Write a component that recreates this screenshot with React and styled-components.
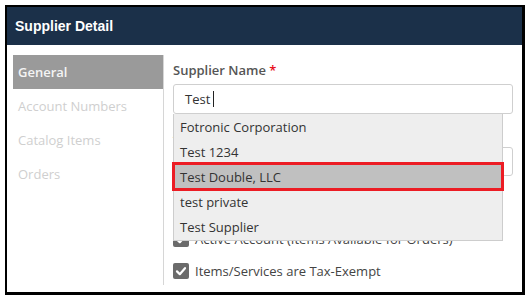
import React from "react";
import styled, { createGlobalStyle } from "styled-components";

const GlobalStyle = createGlobalStyle`
  body {
    margin: 0;
    background: #ffffff;
    font-family: "Open Sans", "Liberation Sans", sans-serif;
  }
`;

const suppliers = [
  "Fotronic Corporation",
  "Test 1234",
  "Test Double, LLC",
  "test private",
  "Test Supplier",
];

const sections = ["General", "Account Numbers", "Catalog Items", "Orders"];

function Check() {
  return (
    <Box>
      <svg width="12" height="12" viewBox="0 0 12 12">
        <path
          d="M2 6.4 L4.8 9.2 L10 3.2"
          fill="none"
          stroke="#fff"
          strokeWidth="2.2"
          strokeLinecap="round"
          strokeLinejoin="round"
        />
      </svg>
    </Box>
  );
}

export default function App() {
  return (
    <>
      <GlobalStyle />
      <Frame>
        <Header>Supplier Detail</Header>
        <Body>
          <Sidebar>
            {sections.map((s, i) => (
              <NavItem key={s} active={i === 0}>
                {s}
              </NavItem>
            ))}
          </Sidebar>
          <Main>
            <Label>
              Supplier Name <Star>*</Star>
            </Label>
            <Field>
              <Input>
                Test<Caret />
              </Input>
              <Dropdown>
                {suppliers.map((s) => (
                  <Option key={s} selected={s === "Test Double, LLC"}>
                    {s}
                  </Option>
                ))}
              </Dropdown>
            </Field>
            <Label>Account Number</Label>
            <Input short />
            <CheckRow>
              <Check />
              Active Account (Items Available for Orders)
            </CheckRow>
            <CheckRow>
              <Check />
              Items/Services are Tax-Exempt
            </CheckRow>
          </Main>
        </Body>
      </Frame>
    </>
  );
}

const Frame = styled.div`
  margin: 5px 0 0 5px;
  width: 515px;
  height: 285px;
  border: 2px solid #000;
  border-right-width: 3px;
  border-bottom-width: 3px;
  overflow: hidden;
  background: #fff;
`;

const Header = styled.div`
  height: 38px;
  display: flex;
  align-items: center;
  padding-left: 8px;
  background: #1b3049;
  color: #fff;
  font-family: "Liberation Sans", Arial, sans-serif;
  font-weight: bold;
  font-size: 14px;
`;

const Body = styled.div`
  display: flex;
  padding: 10px 0 0 6px;
`;

const Sidebar = styled.div`
  width: 150px;
  height: 230px;
  border-right: 1px solid #d6d6d6;
`;

const NavItem = styled.div`
  height: 34px;
  display: flex;
  align-items: center;
  padding-left: 5px;
  font-size: 13px;
  font-weight: ${(p) => (p.active ? 600 : 400)};
  color: ${(p) => (p.active ? "#f4f4f4" : "#cfcfcf")};
  background: ${(p) => (p.active ? "#9a9a9a" : "transparent")};
`;

const Main = styled.div`
  padding: 6px 0 0 9px;
  display: flex;
  flex-direction: column;
`;

const Label = styled.div`
  height: 18px;
  line-height: 18px;
  font-size: 13px;
  font-weight: 600;
  color: #555;
  margin-bottom: 5px;
`;

const Star = styled.span`
  color: #e8101a;
`;

const Field = styled.div`
  position: relative;
  margin-bottom: 10px;
`;

const Input = styled.div`
  box-sizing: border-box;
  width: 340px;
  height: ${(p) => (p.short ? 29 : 30)}px;
  border: 1px solid #cfcfcf;
  border-radius: 3px;
  display: flex;
  align-items: center;
  padding-left: 11px;
  font-size: 13px;
  color: #333;
  margin-bottom: ${(p) => (p.short ? 55 : 0)}px;
`;

const Caret = styled.span`
  display: inline-block;
  width: 1px;
  height: 16px;
  margin-left: 3px;
  background: #222;
`;

const Dropdown = styled.div`
  position: absolute;
  top: 30px;
  left: 0;
  width: 330px;
  box-sizing: border-box;
  border: 1px solid #cdcdcd;
  border-top: none;
  background: #eeeeee;
  z-index: 2;
  padding-bottom: 1px;
`;

const Option = styled.div`
  height: 25px;
  display: flex;
  align-items: center;
  padding-left: 6px;
  font-size: 13px;
  color: #333;
  background: ${(p) => (p.selected ? "#c0c0c0" : "transparent")};
  outline: ${(p) => (p.selected ? "3px solid #ec1c24" : "none")};
  outline-offset: -1px;
  position: relative;
`;

const CheckRow = styled.div`
  display: flex;
  align-items: center;
  gap: 6px;
  height: 16px;
  margin-bottom: 16px;
  font-size: 13px;
  color: #444;
`;

const Box = styled.span`
  width: 16px;
  height: 16px;
  border-radius: 2px;
  background: #6b6b6b;
  display: flex;
  align-items: center;
  justify-content: center;
`;
